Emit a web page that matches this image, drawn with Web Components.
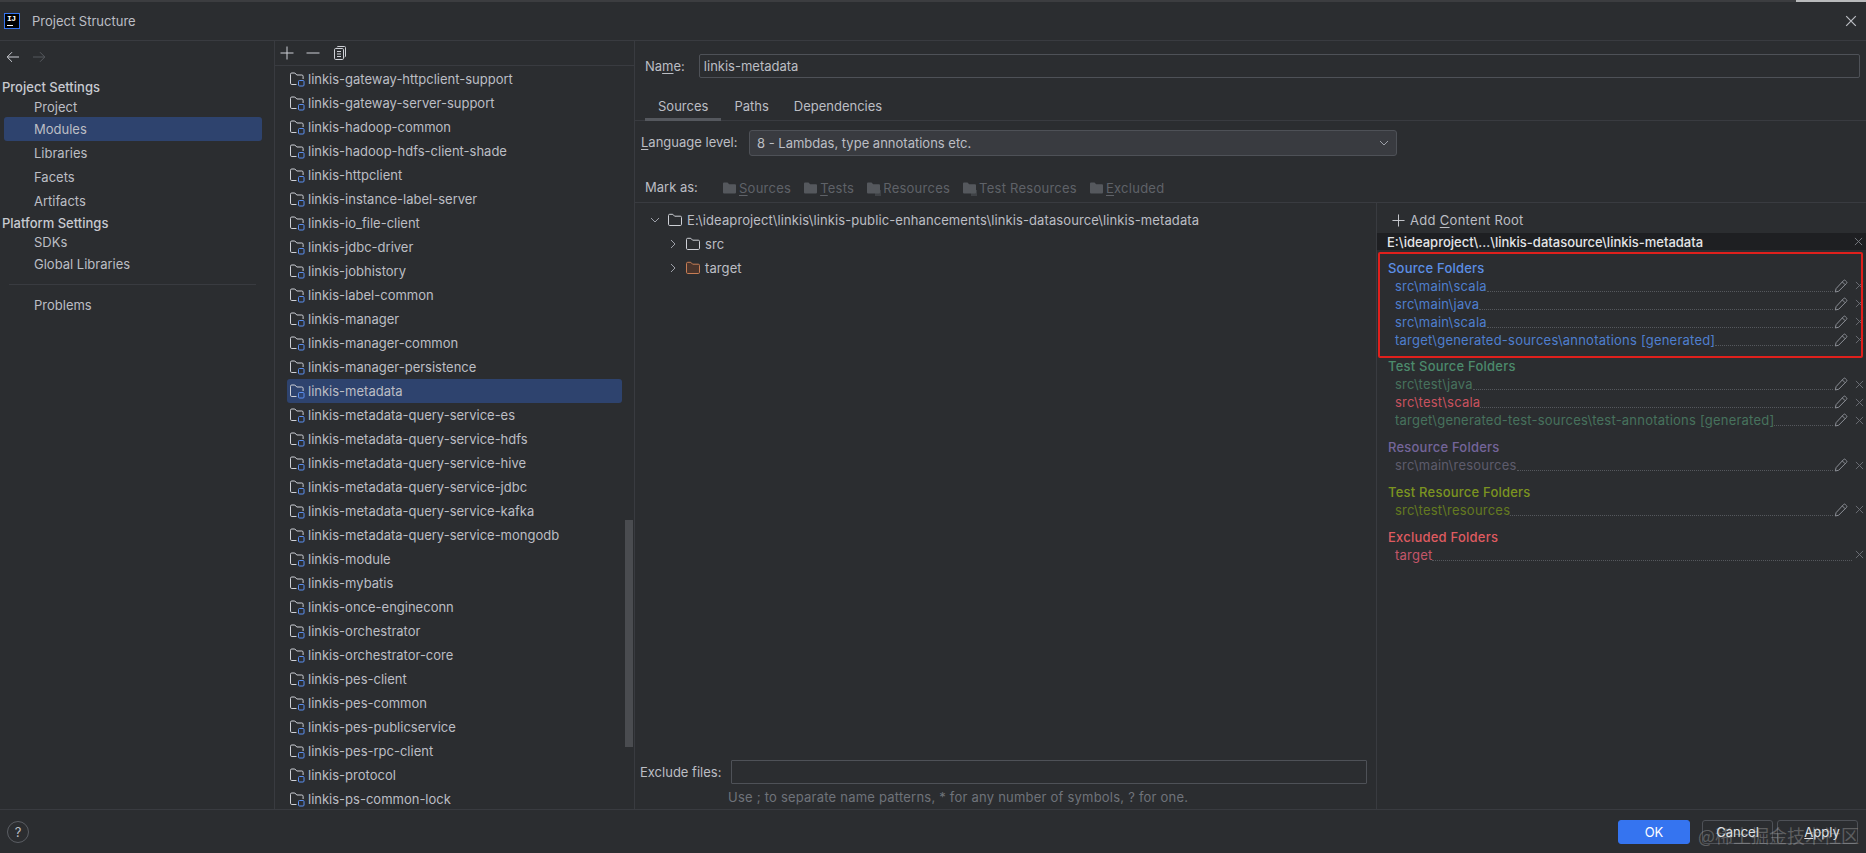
<!DOCTYPE html>
<html lang="en">
<head>
<meta charset="utf-8">
<title>Project Structure</title>
<style>
  html, body { margin: 0; padding: 0; background: #2b2d30; overflow: hidden; }
  body { font: 13px "Inter", "Liberation Sans", sans-serif; color: #bcbec4; }
</style>
</head>
<body>
<ps-dialog>
  <ps-titlebar slot="title">Project Structure</ps-titlebar>
  <ps-sidebar slot="sidebar"></ps-sidebar>
  <ps-module-list slot="modules"></ps-module-list>
  <ps-editor slot="editor">
    <ps-content-panel>
      <ps-folder-group label="Source Folders" head="#5c8fe6" row="#4f7fce">
        <ps-folder-row>src\main\scala</ps-folder-row>
        <ps-folder-row>src\main\java</ps-folder-row>
        <ps-folder-row>src\main\scala</ps-folder-row>
        <ps-folder-row>target\generated-sources\annotations [generated]</ps-folder-row>
      </ps-folder-group>
      <ps-folder-group label="Test Source Folders" head="#4c8a6c" row="#47725d">
        <ps-folder-row>src\test\java</ps-folder-row>
        <ps-folder-row color="#c9525f">src\test\scala</ps-folder-row>
        <ps-folder-row>target\generated-test-sources\test-annotations [generated]</ps-folder-row>
      </ps-folder-group>
      <ps-folder-group label="Resource Folders" head="#74659a" row="#5e5c6c">
        <ps-folder-row>src\main\resources</ps-folder-row>
      </ps-folder-group>
      <ps-folder-group label="Test Resource Folders" head="#7c9420" row="#647a20">
        <ps-folder-row>src\test\resources</ps-folder-row>
      </ps-folder-group>
      <ps-folder-group label="Excluded Folders" head="#df5b60" row="#c4566a">
        <ps-folder-row no-edit>target</ps-folder-row>
      </ps-folder-group>
    </ps-content-panel>
  </ps-editor>
  <ps-footer slot="footer"></ps-footer>
</ps-dialog>

<script>
const LINE = "#393b40";
const ICONS = {
  module: `<svg width="16" height="16" viewBox="0 0 16 16" fill="none"><path d="M7.5 13.5H2.8a1.3 1.3 0 0 1-1.3-1.3V3.3A1.3 1.3 0 0 1 2.8 2h3l2 2h5a1.3 1.3 0 0 1 1.3 1.3V8" stroke="#ced0d6"/><rect x="9.5" y="9.5" width="5.5" height="5.5" rx="1" stroke="#5a8ff0"/></svg>`,
  folder: (c) => `<svg width="16" height="16" viewBox="0 0 16 16" fill="none"><path d="M1.5 3.5A1.2 1.2 0 0 1 2.7 2.3h3.1l1.8 1.900h5.700a1.200 1.200 0 0 1 1.200 1.200v6.900a1.200 1.200 0 0 1-1.200 1.200H2.700a1.200 1.200 0 0 1-1.200-1.200z" stroke="${c}" fill="${c === '#c77d55' ? '#4a352c' : 'none'}"/></svg>`,
  solid: (extra = "") => `<svg width="16" height="16" viewBox="0 0 16 16"><path d="M1 3.500A1 1 0 0 1 2 2.500h3.500l1.700 1.800H13a1 1 0 0 1 1 1v7.200a1 1 0 0 1-1 1H2a1 1 0 0 1-1-1z" fill="#55585d"/>${extra}</svg>`,
  plus: (s = 14) => `<svg width="${s}" height="${s}" viewBox="0 0 14 14" fill="none"><path d="M7 .5v13M.5 7h13" stroke="#ced0d6"/></svg>`,
  minus: `<svg width="14" height="14" viewBox="0 0 14 14" fill="none"><path d="M.5 7h13" stroke="#ced0d6"/></svg>`,
  copy: `<svg width="16" height="16" viewBox="0 0 16 16" fill="none" stroke="#ced0d6"><path d="M5 2.200A1 1 0 0 1 6 1.500h6.500a1 1 0 0 1 1 1V11a1 1 0 0 1-.8 1"/><rect x="2.500" y="3.500" width="9" height="11" rx="1.200"/><path d="M5 6.500h4M5 9h4M5 11.500h4"/></svg>`,
  back: `<svg width="14" height="12" viewBox="0 0 14 12" fill="none" stroke="#ced0d6"><path d="M13 6H1.500M6 1.200 1.200 6 6 10.800"/></svg>`,
  fwd: `<svg width="14" height="12" viewBox="0 0 14 12" fill="none" stroke="#55585d"><path d="M1 6h11.500M8 1.200 12.800 6 8 10.800"/></svg>`,
  down: `<svg width="12" height="12" viewBox="0 0 12 12" fill="none" stroke="#9da0a8"><path d="M2 4l4 4 4-4"/></svg>`,
  right: `<svg width="12" height="12" viewBox="0 0 12 12" fill="none" stroke="#9da0a8"><path d="M4 2l4 4-4 4"/></svg>`,
  pencil: `<svg width="14" height="14" viewBox="0 0 14 14" fill="none" stroke="#8c8f96"><path d="M9.600 1.500a1.200 1.200 0 0 1 1.700 0l1.200 1.200a1.200 1.200 0 0 1 0 1.700l-7.800 7.800-3.400.8.800-3.400zM8.300 2.900l2.800 2.800"/></svg>`,
  close: (c = "#7c7f86", s = 10) => `<svg width="${s}" height="${s}" viewBox="0 0 10 10" fill="none" stroke="${c}"><path d="M1 1l8 8M9 1l-8 8"/></svg>`
};

class PsDialog extends HTMLElement {
  constructor() {
    super();
    this.attachShadow({mode: "open"}).innerHTML = `
      <style>
        :host { display: flex; flex-direction: column; width: 1866px; height: 853px; position: relative; background: #2b2d30; overflow: hidden; }
        .strip { height: 2px; flex: none; background: linear-gradient(90deg, #3c3d40 1796px, #b9babc 1796px); }
        .main { display: flex; flex: 1; min-height: 0; border-top: 1px solid ${LINE}; border-bottom: 1px solid ${LINE}; }
        .mark { position: absolute; left: 1698px; top: 822px; font: 18px/26px "Noto Sans CJK SC", sans-serif; color: rgba(225,225,225,.28); white-space: nowrap; pointer-events: none; }
      </style>
      <div class="strip"></div>
      <slot name="title"></slot>
      <div class="main">
        <slot name="sidebar"></slot>
        <slot name="modules"></slot>
        <slot name="editor"></slot>
      </div>
      <slot name="footer"></slot>
      <div class="mark">@稀土掘金技术社区</div>`;
  }
}

class PsTitlebar extends HTMLElement {
  constructor() {
    super();
    this.attachShadow({mode: "open"}).innerHTML = `
      <style>
        :host { display: flex; align-items: center; height: 38px; flex: none; padding: 0 9px 0 4px; color: #bcbec4; }
        .logo { width: 16px; height: 16px; box-sizing: border-box; background: #000; border: 1px solid #3574f0; display: block; position: relative; margin: -1px 12px 0 0; }
        .logo b { position: absolute; left: 2px; top: 0; font: 700 8px/9px "Liberation Mono", monospace; color: #fff; letter-spacing: -.5px; }
        .logo i { position: absolute; left: 2px; bottom: 2px; width: 6px; height: 1px; background: #fff; }
        .x { margin-left: auto; display: flex; }
      </style>
      <span class="logo"><b>IJ</b><i></i></span>
      <slot></slot>
      <span class="x">${ICONS.close("#bcbec4", 12)}</span>`;
  }
}

class PsSidebar extends HTMLElement {
  constructor() {
    super();
    const row = (text, h, cls = "") => `<div class="row ${cls}" style="height:${h}px">${text}</div>`;
    this.attachShadow({mode: "open"}).innerHTML = `
      <style>
        :host { display: block; width: 274px; flex: none; border-right: 1px solid ${LINE}; }
        .nav { display: flex; gap: 12px; align-items: center; height: 32px; padding-left: 6px; }
        .row { display: flex; align-items: center; padding-left: 34px; }
        .head { padding-left: 2px; color: #c8cad0; font-weight: 500; }
        .sel { background: #2e436e; border-radius: 3px; margin: 0 12px 0 4px; padding-left: 30px; }
        .top { margin-top: 3px; }
        hr { border: 0; height: 1px; background: ${LINE}; margin: 8px 18px 8px 9px; }
      </style>
      <div class="nav">${ICONS.back}${ICONS.fwd}</div>
      <div class="top">
        ${row("Project Settings", 21, "head")}
        ${row("Project", 20)}
        ${row("Modules", 24, "sel")}
        ${row("Libraries", 24)}
        ${row("Facets", 24)}
        ${row("Artifacts", 24)}
        ${row("Platform Settings", 19, "head")}
        ${row("SDKs", 20)}
        ${row("Global Libraries", 24)}
      </div>
      <hr>
      ${row("Problems", 24)}`;
  }
}

class PsModuleRow extends HTMLElement {
  constructor() {
    super();
    this.attachShadow({mode: "open"}).innerHTML = `
      <style>
        :host { display: flex; align-items: center; gap: 3px; height: 24px; margin: 0 12px 0 12px; padding-left: 2px; border-radius: 3px; white-space: nowrap; }
        :host([selected]) { background: #2e436e; }
        svg { flex: none; }
      </style>
      ${ICONS.module}<slot></slot>`;
  }
}

class PsModuleList extends HTMLElement {
  constructor() {
    super();
    const names = ["gateway-httpclient-support", "gateway-server-support", "hadoop-common", "hadoop-hdfs-client-shade",
      "httpclient", "instance-label-server", "io_file-client", "jdbc-driver", "jobhistory", "label-common", "manager",
      "manager-common", "manager-persistence", "metadata", "metadata-query-service-es", "metadata-query-service-hdfs",
      "metadata-query-service-hive", "metadata-query-service-jdbc", "metadata-query-service-kafka",
      "metadata-query-service-mongodb", "module", "mybatis", "once-engineconn", "orchestrator", "orchestrator-core",
      "pes-client", "pes-common", "pes-publicservice", "pes-rpc-client", "protocol", "ps-common-lock"];
    this.attachShadow({mode: "open"}).innerHTML = `
      <style>
        :host { display: flex; flex-direction: column; width: 360px; flex: none; box-sizing: border-box; border-right: 1px solid ${LINE}; min-height: 0; position: relative; }
        .tools { display: flex; align-items: center; height: 24px; flex: none; padding-left: 5px; gap: 12px; border-bottom: 1px solid ${LINE}; }
        .list { flex: 1; overflow: hidden; padding-top: 1px; }
        .thumb { position: absolute; right: 1px; top: 479px; width: 8px; height: 227px; background: #4a4c50; }
      </style>
      <div class="tools">${ICONS.plus()}${ICONS.minus}${ICONS.copy}</div>
      <div class="list">
        ${names.map(n => `<ps-module-row ${n === "metadata" ? "selected" : ""}>linkis-${n}</ps-module-row>`).join("")}
      </div>
      <div class="thumb"></div>`;
  }
}

class PsEditor extends HTMLElement {
  constructor() {
    super();
    const mark = (icon, html) => `<span class="mk">${icon}<span>${html}</span></span>`;
    const lines = `<path d="M9 11h6M9 13h6M9 15h6" stroke="#55585d"/>`;
    this.attachShadow({mode: "open"}).innerHTML = `
      <style>
        :host { display: flex; flex-direction: column; flex: 1; min-width: 0; }
        u { text-underline-offset: 2px; }
        .name { display: flex; align-items: center; height: 24px; margin: 13px 6px 0 10px; gap: 13px; }
        .name .in { flex: 1; height: 22px; border: 1px solid #4e5157; border-radius: 2px; padding: 0 4px; line-height: 22px; margin-left: 1px; }
        .tabs { display: flex; height: 43px; box-sizing: border-box; align-items: stretch; border-bottom: 1px solid ${LINE}; padding-left: 10px; }
        .tab { padding: 20px 13px 0; }
        .tab.on { border-bottom: 3px solid #55585e; margin-bottom: -1px; }
        .tab + .tab { padding: 20px 12px 0 13px; }
        .lang { display: flex; align-items: center; height: 26px; margin: 9px 0 0 6px; }
        .lang > span { width: 108px; margin-top: -2px; flex: none; }
        .combo { width: 648px; box-sizing: border-box; height: 26px; background: #393b40; border: 1px solid #4e5157; border-radius: 3px; display: flex; align-items: center; padding: 0 6px 0 7px; justify-content: space-between; }
        .marks { display: flex; align-items: center; height: 47px; box-sizing: border-box; padding: 17px 0 0 10px; border-bottom: 1px solid ${LINE}; color: #5f6268; letter-spacing: .25px; }
        .marks .lab { width: 77px; color: #bcbec4; flex: none; margin-top: -2px; letter-spacing: 0; }
        .mk { display: flex; align-items: center; gap: 1px; margin-right: 12px; }
        .split { display: flex; flex: 1; min-height: 0; }
        .tree { flex: none; width: 741px; border-right: 1px solid ${LINE}; display: flex; flex-direction: column; padding-top: 5px; box-sizing: content-box; }
        .node { display: flex; align-items: center; height: 24px; gap: 4px; white-space: nowrap; letter-spacing: .1px; }
        .node svg:first-child { flex: none; margin-right: 2px; }
        .exc { display: flex; align-items: center; margin: auto 9px 0 5px; height: 24px; }
        .exc span { width: 91px; flex: none; }
        .exc div { flex: 1; height: 22px; border: 1px solid #4e5157; border-radius: 1px; }
        .hint { color: #6f737a; padding-left: 93px; height: 25px; line-height: 26px; letter-spacing: .22px; white-space: nowrap; }
      </style>
      <div class="name"><span>Na<u>m</u>e:</span><div class="in">linkis-metadata</div></div>
      <div class="tabs">
        <div class="tab on">Sources</div><div class="tab">Paths</div><div class="tab">Dependencies</div>
      </div>
      <div class="lang"><span><u>L</u>anguage level:</span>
        <div class="combo">8 - Lambdas, type annotations etc.${ICONS.down}</div></div>
      <div class="marks"><span class="lab">Mark as:</span>
        ${mark(ICONS.solid(), "<u>S</u>ources")}
        ${mark(ICONS.solid(), "<u>T</u>ests")}
        ${mark(ICONS.solid(lines), "Resources")}
        ${mark(ICONS.solid(lines), "Test Resources")}
        ${mark(ICONS.solid(), "<u>E</u>xcluded")}
      </div>
      <div class="split">
        <div class="tree">
          <div class="node" style="padding-left:14px">${ICONS.down}${ICONS.folder("#ced0d6")}E:\\ideaproject\\linkis\\linkis-public-enhancements\\linkis-datasource\\linkis-metadata</div>
          <div class="node" style="padding-left:32px">${ICONS.right}${ICONS.folder("#ced0d6")}src</div>
          <div class="node" style="padding-left:32px">${ICONS.right}${ICONS.folder("#c77d55")}target</div>
          <div class="exc"><span>Exclude files:</span><div></div></div>
          <div class="hint">Use ; to separate name patterns, * for any number of symbols, ? for one.</div>
        </div>
        <slot></slot>
      </div>`;
  }
}

class PsContentPanel extends HTMLElement {
  constructor() {
    super();
    this.attachShadow({mode: "open"}).innerHTML = `
      <style>
        :host { display: block; flex: 1; min-width: 0; position: relative; }
        .add { display: flex; align-items: center; gap: 5px; height: 30px; padding-left: 15px; box-sizing: border-box; padding-top: 4px; letter-spacing: .3px; }
        .root { display: flex; align-items: center; justify-content: space-between; height: 17px; background: #1e1f22; padding: 0 3px 0 10px; color: #e4e5e8; font-weight: 500; margin-bottom: 8.500px; }
        .groups { padding-left: 11px; letter-spacing: .22px; }
        .box { position: absolute; left: 1px; top: 49px; width: 481px; height: 102px; border: 2px solid #e0201c; border-radius: 2px; pointer-events: none; }
        u { text-underline-offset: 2px; }
      </style>
      <div class="add">${ICONS.plus(13)}<span>Add <u>C</u>ontent Root</span></div>
      <div class="root"><span>E:\\ideaproject\\...\\linkis-datasource\\linkis-metadata</span>${ICONS.close("#7c7f86", 9)}</div>
      <div class="groups"><slot></slot></div>
      <div class="box"></div>`;
  }
}

class PsFolderGroup extends HTMLElement {
  constructor() {
    super();
    this.attachShadow({mode: "open"});
  }
  connectedCallback() {
    this.style.setProperty("--row-color", this.getAttribute("row"));
    this.shadowRoot.innerHTML = `
      <style>
        :host { display: block; margin-bottom: 8.750px; }
        .h { height: 18px; line-height: 18px; font-weight: 500; color: ${this.getAttribute("head")}; }
      </style>
      <div class="h">${this.getAttribute("label")}</div>
      <slot></slot>`;
  }
}

class PsFolderRow extends HTMLElement {
  constructor() {
    super();
    this.attachShadow({mode: "open"});
  }
  connectedCallback() {
    const c = this.getAttribute("color");
    this.shadowRoot.innerHTML = `
      <style>
        :host { display: flex; align-items: center; height: 18px; padding-left: 7px; color: ${c || "var(--row-color)"}; white-space: nowrap; }
        .dots { flex: 1; align-self: stretch; margin-bottom: 3px; border-bottom: 1px dotted #55585d; }
        .ed { display: flex; flex: none; width: 14px; margin: 0 7px 0 1px; }
        .x { display: flex; flex: none; width: 9px; margin-right: 2px; overflow: hidden; }
        :host([no-edit]) .dots { margin-right: 3px; }
      </style>
      <slot></slot><span class="dots"></span>
      ${this.hasAttribute("no-edit") ? "" : `<span class="ed">${ICONS.pencil}</span>`}
      <span class="x">${ICONS.close("#6f7278", 9)}</span>`;
  }
}

class PsFooter extends HTMLElement {
  constructor() {
    super();
    this.attachShadow({mode: "open"}).innerHTML = `
      <style>
        :host { display: flex; align-items: center; height: 43px; flex: none; padding: 0 8px 0 7px; gap: 11px; }
        .help { width: 20px; height: 20px; border: 1px solid #5a5d63; border-radius: 50%; text-align: center; line-height: 20px; margin-right: auto; color: #bcbec4; }
        button { font: inherit; height: 24px; box-sizing: border-box; border-radius: 3px; color: #dfe1e5; background: transparent; border: 1px solid #4e5157; padding: 0; }
        .ok { width: 72px; background: #3574f0; border-color: #3574f0; color: #fff; margin-right: 1px; }
        .ca { width: 71px; }
        .ap { width: 81px; margin-left: -7px; padding-left: 9px; }
      </style>
      <div class="help">?</div>
      <button class="ok">OK</button><button class="ca">Cancel</button><button class="ap"><u>A</u>pply</button>`;
  }
}

customElements.define("ps-dialog", PsDialog);
customElements.define("ps-titlebar", PsTitlebar);
customElements.define("ps-sidebar", PsSidebar);
customElements.define("ps-module-row", PsModuleRow);
customElements.define("ps-module-list", PsModuleList);
customElements.define("ps-editor", PsEditor);
customElements.define("ps-content-panel", PsContentPanel);
customElements.define("ps-folder-group", PsFolderGroup);
customElements.define("ps-folder-row", PsFolderRow);
customElements.define("ps-footer", PsFooter);
</script>
</body>
</html>
